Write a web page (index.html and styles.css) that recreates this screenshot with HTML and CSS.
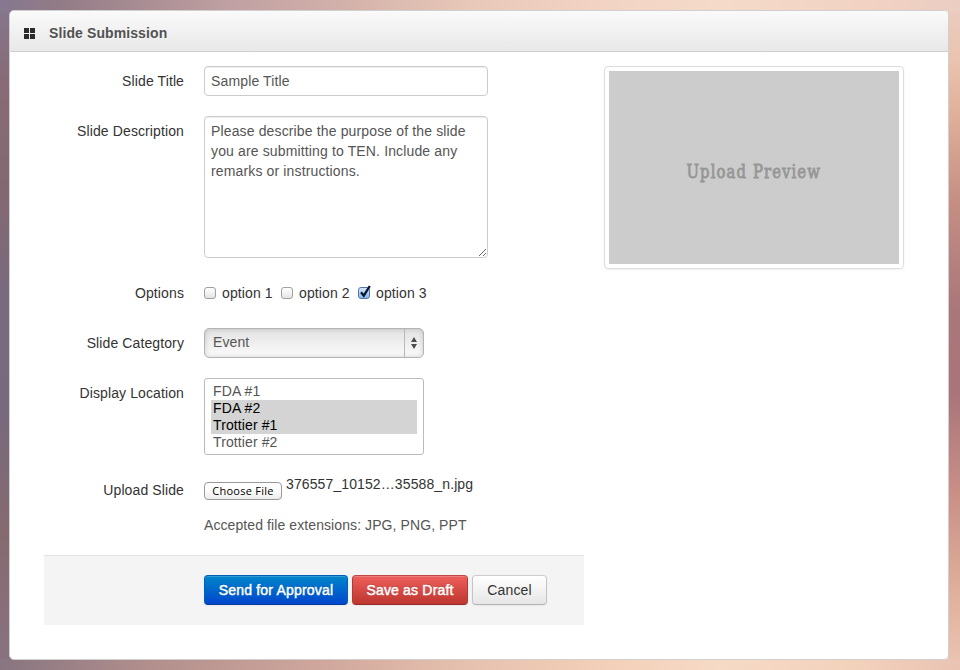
FILE: index.html
```
<!DOCTYPE html>
<html lang="en">
<head>
<meta charset="utf-8">
<title>Slide Submission</title>
<link rel="stylesheet" href="styles.css">
</head>
<body>
<section class="widget">
  <header class="widget-header">
    <svg class="icon" width="11" height="11" viewBox="0 0 11 11"><path fill="#2b2b2b" d="M0 0h5v5H0zM6 0h5v5H6zM0 6h5v5H0zM6 6h5v5H6z"/></svg>
    <h3>Slide Submission</h3>
  </header>
  <div class="widget-content">
    <form class="form">
      <div class="group">
        <label class="label" for="title">Slide Title</label>
        <input class="field" id="title" type="text" value="Sample Title">
      </div>
      <div class="group">
        <label class="label" for="desc">Slide Description</label>
        <textarea class="field area" id="desc">Please describe the purpose of the slide you are submitting to TEN. Include any remarks or instructions.</textarea>
      </div>
      <div class="group options">
        <span class="label">Options</span>
        <div class="checks">
          <label class="check"><span class="box"></span>option 1</label>
          <label class="check"><span class="box"></span>option 2</label>
          <label class="check"><span class="box checked"><svg class="tick" width="14" height="15" viewBox="0 0 14 15"><path d="M3 8.3l2.8 3.4L11.8 2" fill="none" stroke="#0b1530" stroke-width="2.3"/></svg></span>option 3</label>
        </div>
      </div>
      <div class="group">
        <span class="label">Slide Categtory</span>
        <div class="select"><span class="value">Event</span><span class="arrows"><svg width="8" height="14" viewBox="0 0 8 14"><path fill="#4d4d4d" d="M4 1l3 5H1zM4 13l3-5H1z"/></svg></span></div>
      </div>
      <div class="group location">
        <span class="label">Display Location</span>
        <ul class="list">
          <li>FDA #1</li>
          <li class="selected">FDA #2</li>
          <li class="selected">Trottier #1</li>
          <li>Trottier #2</li>
        </ul>
      </div>
      <div class="group upload">
        <span class="label">Upload Slide</span>
        <div class="file"><button class="choose" type="button">Choose File</button><span class="filename">376557_10152…35588_n.jpg</span></div>
      </div>
      <p class="help">Accepted file extensions: JPG, PNG, PPT</p>
      <div class="actions">
        <button class="btn primary" type="button">Send for Approval</button>
        <button class="btn danger" type="button">Save as Draft</button>
        <button class="btn cancel" type="button">Cancel</button>
      </div>
    </form>
    <div class="thumbnail"><div class="preview"><span>Upload Preview</span></div></div>
  </div>
</section>
</body>
</html>
```
FILE: styles.css
```
* { box-sizing: border-box; }
body {
  margin: 0;
  height: 670px;
  overflow: hidden;
  padding: 10px 11px 10px 9px;
  font: 14px/20px "Liberation Sans", Arial, sans-serif;
  letter-spacing: .11px;
  color: #333;
  background:
    linear-gradient(90deg, #857890 0, #927b86 60px, #c0a0a2 230px, #d2b0aa 340px, #e8c8b8 470px, #f2d3c3 590px, #f5dac9 720px, #f1d2c3 870px, #ebcdc2 960px) 0 0 / 960px 11px no-repeat,
    linear-gradient(90deg, #877580 0, #b28f8d 150px, #cda59b 310px, #e6c0ae 460px, #f3d0b9 610px, #f6dac5 720px, #f3d2bc 850px, #eac3b2 960px) 0 659px / 960px 11px no-repeat,
    linear-gradient(180deg, #857890 0, #886b76 80px, #846871 190px, #786b7e 300px, #786a7c 420px, #866a70 530px, #897280 670px) 0 0 / 11px 670px no-repeat,
    linear-gradient(175deg, #ebcdc2 0, #e9c4af 60px, #e1b29b 110px, #c58f84 200px, #a9767a 310px, #a9757a 390px, #c88f87 490px, #dfb09b 590px, #eac3b2 660px) 948px 0 / 12px 670px no-repeat;
}
.widget {
  height: 650px;
  border: 1px solid #d0d0d0;
  border-radius: 5px;
  background: #fff;
  overflow: hidden;
}
.widget-header {
  display: flex;
  align-items: center;
  height: 41px;
  padding: 4px 14px 0;
  gap: 14px;
  border-bottom: 1px solid #d0d0d0;
  background: linear-gradient(#fafafa, #e8e8e8);
}
.icon { display: block; }
h3 { margin: 0; font-size: 14px; line-height: 20px; color: #525252; text-shadow: 1px 1px 2px rgba(255,255,255,.5); letter-spacing: .1px; }
.widget-content { display: flex; align-items: flex-start; gap: 20px; padding: 14px 34px 0; }
.form { width: 540px; }
.group { display: flex; gap: 20px; margin-bottom: 20px; }
.label { width: 140px; padding-top: 5px; text-align: right; }
.field {
  width: 284px;
  height: 30px;
  margin: 0;
  padding: 4px 6px;
  border: 1px solid #ccc;
  border-radius: 4px;
  font: inherit;
  letter-spacing: .14px;
  color: #555;
  box-shadow: inset 0 1px 1px rgba(0,0,0,.075);
}
.area { height: 142px; resize: vertical; }
.options { height: 30px; align-items: flex-start; }
.checks { display: flex; gap: 8.3px; padding-top: 5px; }
.check { display: flex; align-items: center; gap: 6px; height: 20px; }
.box {
  position: relative;
  width: 12px;
  height: 12px;
  border: 1px solid #a0a0a0;
  border-radius: 3px;
  background: linear-gradient(#fff, #e4e4e4);
}
.checked { border-color: #5676a8; background: linear-gradient(#d4e7fa, #85baef); }
.tick { position: absolute; left: -1px; top: -4px; }
.select {
  display: flex;
  width: 220px;
  height: 30px;
  border: 1px solid #b4b4b4;
  border-radius: 5px;
  background: linear-gradient(#e2e2e2, #fbfbfb);
  box-shadow: inset 0 0 5px rgba(0,0,0,.16);
  color: #555;
}
.value { flex: 1; padding: 3px 8px; }
.arrows { display: flex; align-items: center; width: 19px; padding-left: 5px; border-left: 1px solid #b8b8b8; }
.list {
  width: 220px;
  height: 77px;
  margin: 0;
  padding: 4px 6px;
  border: 1px solid #bbb;
  border-radius: 3px;
  list-style: none;
  line-height: 17px;
  color: #555;
}
.list li { height: 17px; padding-left: 2px; }
.list .selected { background: #d4d4d4; color: #000; }
.upload { height: 30px; margin-bottom: 10px; }
.file { display: flex; gap: 4px; }
.choose {
  width: 78px;
  height: 18px;
  margin: 7px 0 0;
  padding: 0;
  border: 1px solid #999;
  border-radius: 4px;
  background: linear-gradient(#fff 40%, #ececec);
  font: 11px/14px "Open Sans", sans-serif;
  letter-spacing: .25px;
  color: #000;
}
.filename { margin-top: -1px; }
.help { margin: 0 0 20px 160px; color: #555; letter-spacing: .09px; }
.actions {
  display: flex;
  gap: 4px;
  height: 70px;
  padding: 19px 0 20px 160px;
  border-top: 1px solid #e5e5e5;
  background: #f4f4f4;
}
.btn {
  height: 30px;
  padding: 0;
  border: 1px solid;
  border-radius: 4px;
  font: 14px/20px "Liberation Sans", Arial, sans-serif;
  letter-spacing: .18px;
  box-shadow: inset 0 1px 0 rgba(255,255,255,.2), 0 1px 2px rgba(0,0,0,.05);
}
.primary, .danger { color: #fff; text-shadow: 0 -1px 0 rgba(0,0,0,.25); -webkit-text-stroke: .45px #fff; }
.primary { width: 144px; border-color: #0060b5 #0060b5 #003b9b; background: linear-gradient(#08c, #04c); background-origin: border-box; }
.danger { width: 116px; border-color: #c04743 #b43a35 #942a25; background: linear-gradient(#ee5f5b, #bd362f); }
.cancel { width: 75px; border-color: #ccc #c4c4c4 #b3b3b3; background: linear-gradient(#fff, #e6e6e6); color: #333; }
.thumbnail {
  width: 300px;
  height: 203px;
  padding: 4px;
  border: 1px solid #ddd;
  border-radius: 4px;
  box-shadow: 0 1px 3px rgba(0,0,0,.055);
}
.preview {
  display: flex;
  align-items: center;
  justify-content: center;
  height: 193px;
  padding: 7px 1px 0 0;
  background: #ccc;
  color: #969696;
  font: 19px/24px "DejaVu Serif Condensed", "DejaVu Serif", serif;
  font-stretch: condensed;
  letter-spacing: 1.3px;
  -webkit-text-stroke: .8px #969696;
}
.preview span { transform: scaleX(.865); white-space: nowrap; }
```
